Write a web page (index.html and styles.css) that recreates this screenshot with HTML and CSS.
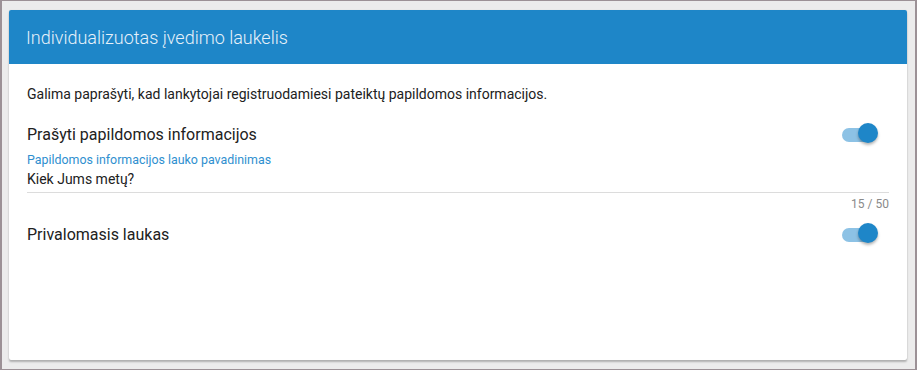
FILE: index.html
```html
<!DOCTYPE html>
<html>
<head>
  <meta charset="utf-8">
  <title>Individualizuotas įvedimo laukelis</title>
  <link rel="stylesheet" href="styles.css">
</head>
<body>
  <div id="frame">
    <div class="card">
      <div class="card-title">Individualizuotas įvedimo laukelis</div>
      <div class="card-body">
        <p class="hint">Galima paprašyti, kad lankytojai registruodamiesi pateiktų papildomos informacijos.</p>

        <div class="switch-row">
          <span class="switch-label">Prašyti papildomos informacijos</span>
          <span class="switch on"><span class="track"></span><span class="thumb"></span></span>
        </div>

        <div class="field">
          <label for="extra-name">Papildomos informacijos lauko pavadinimas</label>
          <input id="extra-name" type="text" value="Kiek Jums metų?">
          <div class="counter">15 / 50</div>
        </div>

        <div class="switch-row">
          <span class="switch-label">Privalomasis laukas</span>
          <span class="switch on"><span class="track"></span><span class="thumb"></span></span>
        </div>
      </div>
    </div>
  </div>
</body>
</html>
```

FILE: styles.css
```css
html, body {
  margin: 0;
  padding: 0;
}
body {
  font-family: Roboto, "Noto Sans", sans-serif;
  color: #212121;
}
#frame {
  box-sizing: border-box;
  width: 917px;
  height: 370px;
  border: 1px solid #9c9196;
  border-left-width: 2px;
  border-right-width: 2px;
  background-color: #ececec;
  padding: 9px 8px 8px 7px;
}
.card {
  height: 350px;
  background-color: #ffffff;
  border-radius: 2px;
  box-shadow: 0 2px 2px rgba(0, 0, 0, 0.25), 0 0 1px rgba(0, 0, 0, 0.15);
  overflow: hidden;
}
.card-title {
  height: 54px;
  display: flex;
  align-items: center;
  padding: 0 17px;
  background-color: #1e86c8;
  color: #e6f1fa;
  font-size: 18px;
  font-weight: 300;
}
.card-body {
  padding: 0 18px;
}
.hint {
  margin: 0;
  padding-top: 20px;
  font-size: 14px;
  line-height: 20px;
}
.switch-row {
  display: flex;
  align-items: center;
  justify-content: space-between;
  height: 28px;
  padding-right: 11px;
}
.hint + .switch-row {
  margin-top: 16px;
}
.switch-label {
  font-size: 16px;
}
.switch {
  position: relative;
  width: 36px;
  height: 20px;
}
.track {
  position: absolute;
  left: 0;
  top: 4px;
  width: 34px;
  height: 14px;
  border-radius: 7px;
  background-color: #8dc2e5;
}
.thumb {
  position: absolute;
  right: 0;
  top: -1px;
  width: 20px;
  height: 20px;
  border-radius: 50%;
  background-color: #1e86c8;
  box-shadow: 0 2px 3px rgba(0, 0, 0, 0.3);
}
.field {
  margin-top: 5px;
}
.field label {
  display: block;
  color: #2f8fcf;
  font-size: 12.4px;
  line-height: 14px;
}
.field input {
  display: block;
  box-sizing: border-box;
  width: 100%;
  border: none;
  border-bottom: 1px solid #dcdcdc;
  padding: 2px 0 3px;
  margin: 0;
  font-family: inherit;
  font-size: 14px;
  line-height: 20px;
  color: #212121;
  outline: none;
}
.counter {
  padding-top: 1px;
  text-align: right;
  font-size: 12px;
  line-height: 20px;
  color: #8a8a8a;
}
.field + .switch-row {
  margin-top: 6px;
}
```
